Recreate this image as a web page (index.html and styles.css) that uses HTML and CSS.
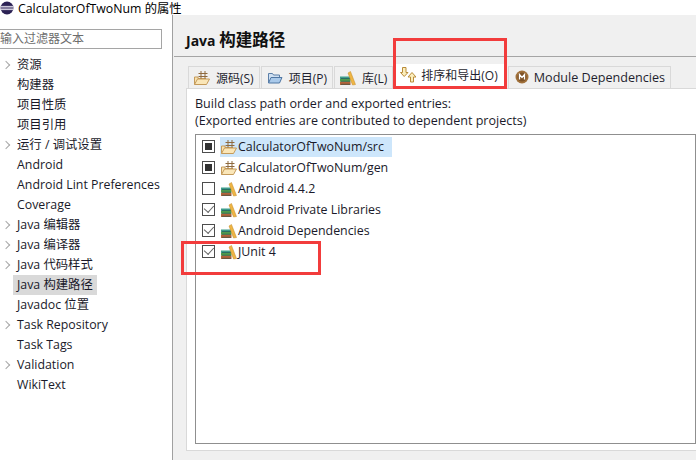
FILE: index.html
```html
<!DOCTYPE html>
<html lang="en">
<head>
    <meta charset="UTF-8">
    <title>CalculatorOfTwoNum 的属性</title>
    <link rel="stylesheet" href="styles.css">
</head>
<body>
    <svg width="0" height="0" class="defs">
        <symbol id="pkg" viewBox="0 0 16 16">
            <path d="M0.500 14.500V7h3.500V8.500H12" fill="#f8e2b0" stroke="#c49a5a"/>
            <path d="M0.500 14.500L3.500 9h12L12.500 14.500z" fill="#fae6b8" stroke="#c49a5a"/>
            <path d="M4.500 3.500h9M4.500 6.500h9M7 1v7.500M11 1v7.500" stroke="#8f6a3e" fill="none"/>
        </symbol>
        <symbol id="lib" viewBox="0 0 16 16">
            <rect x="0" y="6.500" width="10.500" height="2.500" fill="#3f9d8c"/>
            <rect x="0" y="9" width="10.500" height="2.800" fill="#4f9a4e"/>
            <rect x="0" y="11.800" width="10.500" height="3.200" fill="#b4633a"/>
            <path d="M1 8.500h9M1 11.300h9M1 14.300h9" stroke="#1f4d48" stroke-width="0.600"/>
            <path d="M8 3L10.500 1.500 15.500 14.500 12.500 15z" fill="#efb544" stroke="#c08a2a" stroke-width="0.500"/>
        </symbol>
    </svg>

    <div class="titlebar">
        <svg class="app-icon" width="16" height="16" viewBox="0 0 16 16">
            <circle cx="7" cy="8" r="6.500" fill="#2c2255"/>
            <path d="M0.500 6.400h13M0.500 8h13M0.500 9.600h13" stroke="#f3f0f8" stroke-width="0.900"/>
        </svg>
        <span>CalculatorOfTwoNum 的属性</span>
    </div>

    <div class="main">
        <div class="sidebar">
            <div class="filter">输入过滤器文本</div>
            <ul class="tree">
                <li class="has-kids">资源</li>
                <li>构建器</li>
                <li>项目性质</li>
                <li>项目引用</li>
                <li class="has-kids">运行 / 调试设置</li>
                <li>Android</li>
                <li>Android Lint Preferences</li>
                <li>Coverage</li>
                <li class="has-kids">Java 编辑器</li>
                <li class="has-kids">Java 编译器</li>
                <li class="has-kids">Java 代码样式</li>
                <li class="selected"><span>Java 构建路径</span></li>
                <li>Javadoc 位置</li>
                <li class="has-kids">Task Repository</li>
                <li>Task Tags</li>
                <li class="has-kids">Validation</li>
                <li>WikiText</li>
            </ul>
        </div>

        <div class="content">
            <h1 class="page-title">Java <span class="cjk-big">构建路径</span></h1>
            <div class="tabs">
                <div class="tab"><svg class="icon"><use href="#pkg"/></svg>源码(S)</div>
                <div class="tab">
                    <svg class="icon" viewBox="0 0 16 16">
                        <path d="M1.500 13V3.500h4l1 1.500h6v2" fill="#cfe0f2" stroke="#5b7fa8"/>
                        <path d="M1.500 13L4 7.500h11L12.500 13z" fill="#a9c9ea" stroke="#4f76a3"/>
                    </svg>项目(P)
                </div>
                <div class="tab"><svg class="icon"><use href="#lib"/></svg>库(L)</div>
                <div class="tab active">
                    <svg class="icon" viewBox="0 0 16 16">
                        <path d="M2.500 0.500h3.500v5h2L4.200 9.500 0.500 5.500h2z" fill="#fbeebd" stroke="#b98c3a"/>
                        <path d="M10.500 15v-5h-2.500l4-4.500 4 4.500h-2.500v5z" fill="#fbeebd" stroke="#b98c3a"/>
                    </svg>排序和导出(O)
                </div>
                <div class="tab tab-module">
                    <svg class="icon" viewBox="0 0 16 16">
                        <circle cx="8" cy="7" r="6.500" fill="#a0703a"/>
                        <circle cx="8" cy="7" r="4.500" fill="#7d5227"/>
                        <path d="M5.500 9.500v-5l2.500 3 2.500-3v5" stroke="#fff" fill="none" stroke-width="1.300"/>
                    </svg>Module Dependencies
                </div>
            </div>
            <div class="panel">
                <p class="desc">Build class path order and exported entries:<br>(Exported entries are contributed to dependent projects)</p>
                <div class="entries">
                    <div class="entry">
                        <span class="check mixed"></span>
                        <span class="item hilite"><svg class="icon"><use href="#pkg"/></svg>CalculatorOfTwoNum/src</span>
                    </div>
                    <div class="entry">
                        <span class="check mixed"></span>
                        <span class="item"><svg class="icon"><use href="#pkg"/></svg>CalculatorOfTwoNum/gen</span>
                    </div>
                    <div class="entry">
                        <span class="check"></span>
                        <span class="item"><svg class="icon"><use href="#lib"/></svg>Android 4.4.2</span>
                    </div>
                    <div class="entry">
                        <span class="check on"></span>
                        <span class="item"><svg class="icon"><use href="#lib"/></svg>Android Private Libraries</span>
                    </div>
                    <div class="entry">
                        <span class="check on"></span>
                        <span class="item"><svg class="icon"><use href="#lib"/></svg>Android Dependencies</span>
                    </div>
                    <div class="entry">
                        <span class="check on"></span>
                        <span class="item"><svg class="icon"><use href="#lib"/></svg>JUnit 4</span>
                    </div>
                </div>
            </div>
        </div>
    </div>

    <!-- red marks drawn over the screenshot -->
    <div class="mark mark-tab"></div>
    <div class="mark mark-junit"></div>
</body>
</html>
```

FILE: styles.css
```css
html, body {
    margin: 0;
    padding: 0;
    height: 460px;
    overflow: hidden;
}
body {
    font-family: "Open Sans", "Noto Sans CJK SC", sans-serif;
    font-size: 12px;
    color: #1a1a2a;
    background-color: #fff;
    position: relative;
}
.defs {
    position: absolute;
}
.titlebar {
    display: flex;
    align-items: center;
    gap: 2px;
    height: 15px;
    font-size: 12.300px;
    color: #000;
}
.app-icon {
    flex: none;
}
.main {
    display: flex;
    height: 445px;
}
.sidebar {
    width: 173px;
    flex: none;
    padding-top: 14px;
    box-sizing: border-box;
    border-right: 1px solid #a0a0a0;
}
.filter {
    height: 20px;
    width: 162px;
    line-height: 18px;
    box-sizing: border-box;
    border: 1px solid #a5a5a5;
    border-left: none;
    color: #6d6d6d;
}
.tree {
    list-style: none;
    margin: 6px 0 0 0;
    padding: 0 0 0 17px;
    font-size: 12.350px;
}
.tree li {
    height: 20px;
    line-height: 20px;
    white-space: nowrap;
    position: relative;
}
.has-kids::before {
    content: "";
    position: absolute;
    left: -14px;
    top: 7px;
    width: 5px;
    height: 5px;
    border-top: 1.5px solid #a8a8a8;
    border-right: 1.5px solid #a8a8a8;
    transform: rotate(45deg);
}
.selected span {
    display: inline-block;
    background-color: #d9d9d9;
    margin-left: -4px;
    padding: 0 4px;
}
.content {
    flex: 1;
    background-color: #f0f0f0;
    padding-left: 1px;
    min-width: 0;
}
.page-title {
    margin: 0;
    height: 42px;
    line-height: 50px;
    padding-left: 12px;
    font-size: 14px;
    font-weight: bold;
    box-sizing: border-box;
    border-bottom: 1px solid #a5a5a5;
    color: #111;
}
.cjk-big {
    font-size: 16.500px;
}
.tabs {
    display: flex;
    margin: 9px 0 0 14px;
    height: 22px;
    align-items: flex-end;
}
.tab {
    display: flex;
    align-items: center;
    gap: 6px;
    height: 22px;
    box-sizing: border-box;
    padding: 0 5px 0 5px;
    margin-right: 1px;
    border: 1px solid #d9d9d9;
    border-bottom: none;
    white-space: nowrap;
    color: #1f1f2f;
}
.tab.active {
    background-color: #fff;
    height: 24px;
    border: none;
    margin-right: 1px;
    padding: 0 9px 2px 6px;
    gap: 5px;
}
.tab-module {
    gap: 4px;
    font-size: 12.600px;
}
.icon {
    width: 16px;
    height: 16px;
    flex: none;
}
.panel {
    background-color: #fff;
    margin-left: 12px;
    height: 363px;
    padding: 6px 0 0 8px;
    box-sizing: border-box;
    border-top: 1px solid #d9d9d9;
    border-bottom: 1px solid #d9d9d9;
    border-left: 1px solid #d9d9d9;
}
.desc {
    margin: 0 0 5px 0;
    line-height: 17px;
    font-size: 12.550px;
}
.entries {
    height: 310px;
    box-sizing: border-box;
    border: 1px solid #8f8f8f;
    padding: 1px 0 0 6px;
    font-size: 12.400px;
}
.entry {
    display: flex;
    align-items: center;
    height: 21px;
    gap: 5px;
}
.item {
    display: flex;
    align-items: center;
    height: 20px;
    gap: 1px;
    padding: 0 8px 0 1px;
    white-space: nowrap;
}
.hilite {
    background-color: #cde6fb;
}
.check {
    width: 13px;
    height: 13px;
    flex: none;
    box-sizing: border-box;
    border: 1px solid #4d4d4d;
    background-color: #fff;
    position: relative;
}
.check.mixed::after {
    content: "";
    position: absolute;
    left: 2px;
    top: 2px;
    width: 7px;
    height: 7px;
    background-color: #333;
}
.check.on::after {
    content: "";
    position: absolute;
    left: 3px;
    top: -1px;
    width: 4.500px;
    height: 8px;
    border-right: 1.5px solid #666;
    border-bottom: 1.5px solid #666;
    transform: rotate(42deg);
}
.mark {
    position: absolute;
    box-sizing: border-box;
    border: 3px solid #f23c3c;
}
.mark-tab {
    left: 393px;
    top: 38px;
    width: 114px;
    height: 51px;
}
.mark-junit {
    left: 181px;
    top: 241px;
    width: 140px;
    height: 34px;
}
```
